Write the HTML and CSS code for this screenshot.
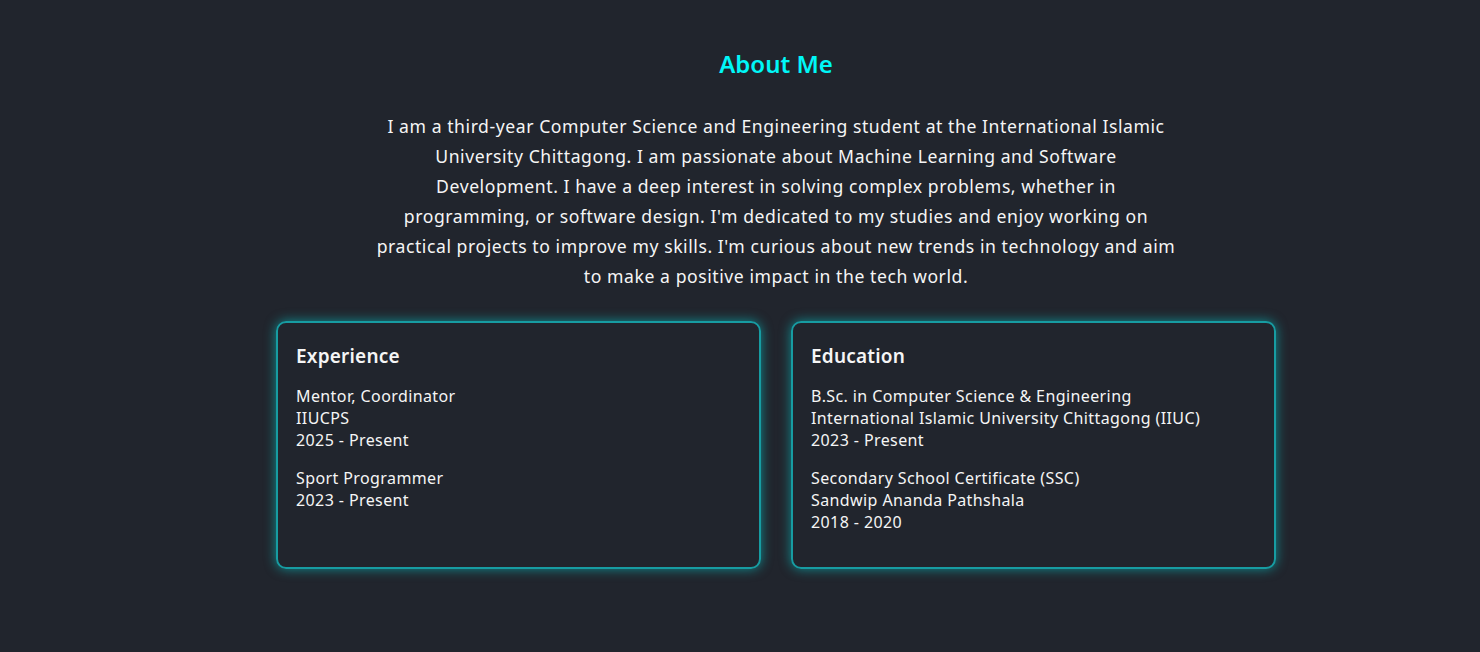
FILE: index.html
```html
<!DOCTYPE html>
<html lang="en">
<head>
<meta charset="utf-8">
<title>About Me</title>
<link rel="stylesheet" href="styles.css">
</head>
<body>
<section class="about">
  <h2 class="about-title">About Me</h2>
  <p class="about-text">I am a third-year Computer Science and Engineering student at the International Islamic University Chittagong. I am passionate about Machine Learning and Software Development. I have a deep interest in solving complex problems, whether in programming, or software design. I'm dedicated to my studies and enjoy working on practical projects to improve my skills. I'm curious about new trends in technology and aim to make a positive impact in the tech world.</p>
  <div class="cards">
    <div class="card">
      <h3 class="card-title">Experience</h3>
      <div class="item">
        <div>Mentor, Coordinator</div>
        <div>IIUCPS</div>
        <div>2025 - Present</div>
      </div>
      <div class="item">
        <div>Sport Programmer</div>
        <div>2023 - Present</div>
      </div>
    </div>
    <div class="card">
      <h3 class="card-title">Education</h3>
      <div class="item">
        <div>B.Sc. in Computer Science &amp; Engineering</div>
        <div>International Islamic University Chittagong (IIUC)</div>
        <div>2023 - Present</div>
      </div>
      <div class="item">
        <div>Secondary School Certificate (SSC)</div>
        <div>Sandwip Ananda Pathshala</div>
        <div>2018 - 2020</div>
      </div>
    </div>
  </div>
</section>
</body>
</html>
```

FILE: styles.css
```css
* { box-sizing: border-box; }
html, body { margin: 0; padding: 0; }
body {
  background: #21252d;
  color: #f5f5f5;
  font-family: "Noto Sans", "Open Sans", sans-serif;
  height: 652px;
  overflow: hidden;
}
.about {
  padding: 46px 0 0 72px;
  display: flex;
  flex-direction: column;
  align-items: center;
}
.about-title {
  margin: 0 0 30px;
  font-size: 24px;
  line-height: 36px;
  font-weight: 600;
  color: #00f7f7;
}
.about-text {
  margin: 0 0 30px;
  width: 802px;
  text-align: center;
  font-size: 17.6px;
  line-height: 29.9px;
  letter-spacing: 0.56px;
}
.cards {
  width: 1000px;
  display: grid;
  grid-template-columns: 1fr 1fr;
  gap: 30px;
}
.card {
  border: 2px solid #179ca2;
  border-radius: 10px;
  padding: 18px;
  box-shadow: 0 0 12px rgba(0, 225, 225, 0.55);
}
.card-title {
  margin: 0 0 14px;
  font-size: 19px;
  line-height: 30px;
  font-weight: 600;
  letter-spacing: 0.2px;
}
.item {
  margin-bottom: 16px;
  font-size: 16px;
  line-height: 22px;
  letter-spacing: 0.4px;
}
```
